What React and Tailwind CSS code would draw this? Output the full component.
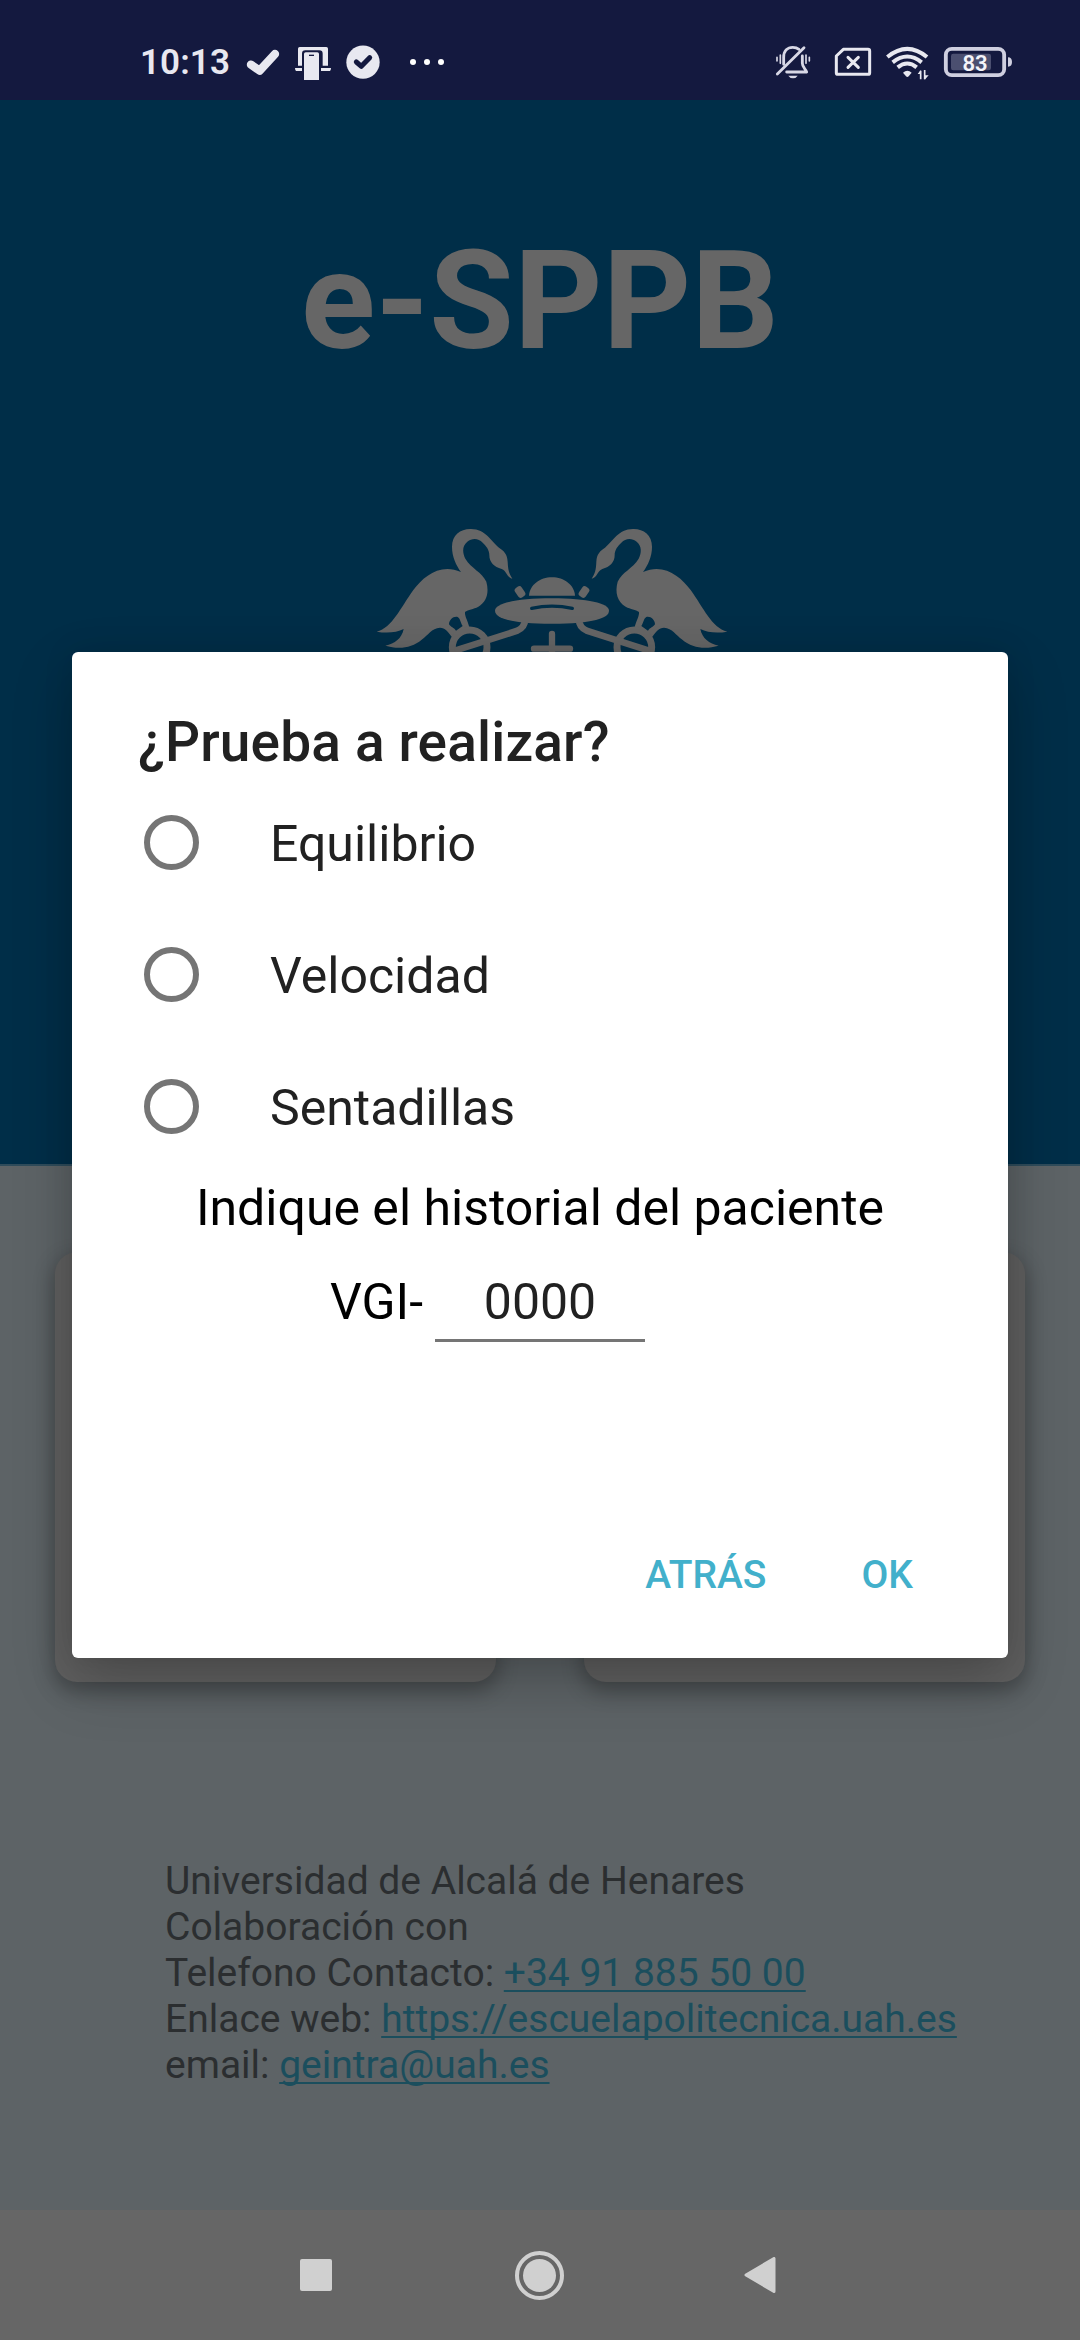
function CheckIcon() {
  return (
    <svg className="block h-9 w-9" viewBox="375 75 108 108" fill="none" stroke="#e8e8f0" strokeWidth="25" strokeLinecap="round" strokeLinejoin="round">
      <path d="M393 134L419 152L465 102" />
    </svg>
  );
}

function PhoneDesktopIcon() {
  return (
    <svg className="block h-9 w-9" viewBox="525 75 108 108" fill="#e8e8f0">
      <path d="M534 137V86Q534 81 539 81H619Q624 81 624 86V137H608V101Q608 91 598 91H556Q546 91 546 101V137Z" />
      <path d="M525 144H546V153H528Q525 150 525 144ZM603 144H633Q633 150 630 153H603Z" />
      <path d="M552 180V102Q552 97 557 97H592Q597 97 597 102V180Z" />
      <path d="M567 104H582V108H567Z" fill="#14193f" />
    </svg>
  );
}

function CheckCircleIcon() {
  return (
    <svg className="block h-9 w-9" viewBox="675 75 108 108" fill="none">
      <circle cx="729" cy="126.500" r="50" fill="#e8e8f0" />
      <path d="M709 126L724 139L749 113" stroke="#14193f" strokeWidth="15" strokeLinecap="round" strokeLinejoin="round" />
    </svg>
  );
}

function BellOffIcon() {
  return (
    <svg className="block h-9 w-[39px]" viewBox="102 75 117 108" fill="none" stroke="#d8d8e6" strokeWidth="8.500" strokeLinecap="round">
      <path d="M131 133V112C131 92 143 82 158 82C166 82 172 84 177 88" />
      <path d="M187 108V130C187 143 198 147 200 156H140" strokeLinejoin="round" />
      <path d="M112 162L192 83" />
      <path d="M111 112V123M121 105V130M198 105V130M208 112V123" strokeWidth="5" />
      <path d="M145 167H173Q168 175 159 175Q150 175 145 167Z" fill="#d8d8e6" stroke="none" />
    </svg>
  );
}

function SimOffIcon() {
  return (
    <svg className="block h-9 w-[39px]" viewBox="282 75 117 108" fill="none" stroke="#e8e8f0" strokeWidth="9" strokeLinejoin="round" strokeLinecap="round">
      <path d="M310 88H384Q389 88 389 93V158Q389 163 384 163H294Q289 163 289 158V108Z" />
      <path d="M324 112L355 142M355 112L324 142" />
    </svg>
  );
}

function WifiIcon() {
  return (
    <svg className="block h-9 w-[45px]" viewBox="435 75 135 108" fill="none" stroke="#e8e8f0" strokeWidth="12">
      <path d="M442 111Q502 62 561 111M458 127Q502 92 545 127M473 142Q502 119 530 142" />
      <path d="M489 158Q502 147 515 158L506 169Q502 173 498 169Z" fill="#e8e8f0" stroke="none" />
      <path d="M542 178V152M554 150V178" strokeWidth="5" />
      <path d="M533 162L542 150V162ZM566 166L554 179V166Z" fill="#e8e8f0" stroke="none" />
    </svg>
  );
}

function BatteryIcon() {
  return (
    <svg className="block h-9 w-[70px]" viewBox="609 75 210 108">
      <rect x="617.500" y="86.500" width="175" height="79" rx="18" fill="none" stroke="#cfcfe0" strokeWidth="11.500" />
      <rect x="633" y="101" width="120" height="50" rx="7" fill="#4b4f70" />
      <path d="M804 112Q816 112 816 126Q816 140 804 140Z" fill="#cfcfe0" />
      <text x="705" y="152" textAnchor="middle" fontFamily="Roboto, sans-serif" fontWeight="600" fontSize="66" fill="#f4f4fa">83</text>
    </svg>
  );
}

function Swan() {
  return (
    <g>
      <path d="M50 365C98 352 120 295 160 240C190 200 240 158 303 186C288 165 276 140 276 110C276 75 302 56 333 57C378 58 391 92 417 113C432 123 442 132 443 155C444 180 447 190 457 206C440 202 441 184 425 177C402 171 388 157 388 136C388 118 378 108 368 98C355 84 336 84 322 95C306 108 307 128 316 146C334 176 366 186 379 215C388 248 380 275 355 290C340 298 325 298 315 306C314 320 323 330 328 352L275 380C262 362 256 355 240 353C215 354 204 376 185 389C155 415 115 418 76 407C105 400 125 386 131 357C110 368 80 370 50 365Z" />
      <path d="M267 343C267 330 280 318 293 321C301 325 301 338 308 348L288 362C281 352 273 352 267 343Z" fill="#002e48" />
      <circle cx="329" cy="412" r="52" fill="none" stroke="#666" strokeWidth="21" />
      <path d="M285 422L470 363Q495 352 495 330" fill="none" stroke="#666" strokeWidth="20" />
      <rect x="468" y="229" width="24" height="34" rx="9" transform="rotate(-35 480 246)" />
    </g>
  );
}

function Crest() {
  return (
    <svg className="block h-[160px] w-[380px]" viewBox="0 0 1140 480" fill="#666">
      <Swan />
      <g transform="translate(1152 0) scale(-1 1)">
        <Swan />
      </g>
      <path d="M507 257C509 225 540 202 576 202C612 202 643 225 645 257Z" />
      <path d="M405 302C405 280 470 265 576 265C682 265 747 280 747 302C747 324 700 341 576 341C452 341 405 324 405 302Z" />
      <path d="M515 295Q576 282 637 295" fill="none" stroke="#002e48" strokeWidth="10" strokeLinecap="round" />
      <path d="M576 372V470" fill="none" stroke="#666" strokeWidth="19" strokeLinecap="round" />
      <path d="M522 416H630" fill="none" stroke="#666" strokeWidth="19" strokeLinecap="round" />
    </svg>
  );
}

function StatusBar() {
  return (
    <div className="flex h-[100px] items-start bg-[#14193f] pt-[45px] pr-[67px] pl-[140px]">
      <span className="w-[105px] text-[35px] leading-9 font-semibold tracking-[0.1px] whitespace-nowrap text-[#e8e8f0]">10:13</span>
      <CheckIcon />
      <div className="ml-3.5"><PhoneDesktopIcon /></div>
      <div className="ml-3.5"><CheckCircleIcon /></div>
      <div className="mt-3.5 ml-[29px] flex gap-2">
        <span className="size-1.5 rounded-full bg-white" />
        <span className="size-1.5 rounded-full bg-white" />
        <span className="size-1.5 rounded-full bg-white" />
      </div>
      <div className="ml-auto flex">
        <BellOffIcon />
        <div className="ml-[21px]"><SimOffIcon /></div>
        <div className="ml-3"><WifiIcon /></div>
        <div className="ml-[13px]"><BatteryIcon /></div>
      </div>
    </div>
  );
}

function NavBar() {
  return (
    <div className="flex h-[130px] items-center bg-[#666] pl-[300px]">
      <span className="size-8 rounded-[2px] bg-[#d0d0d0]" />
      <span className="ml-[183px] flex size-[49px] items-center justify-center rounded-full border-4 border-[#d0d0d0]">
        <span className="size-[33px] rounded-full bg-[#d0d0d0]" />
      </span>
      <svg className="ml-[180px] block h-9 w-8" viewBox="0 0 32 36" fill="#d0d0d0" stroke="#d0d0d0" strokeWidth="3" strokeLinejoin="round">
        <path d="M2 18L30 1.500V34.500Z" />
      </svg>
    </div>
  );
}

const links = "text-[#1b4e5d] underline decoration-2 underline-offset-[4px] [text-decoration-skip-ink:none]";
const tests = ["Equilibrio", "Velocidad", "Sentadillas"];

function Dialog() {
  return (
    <div className="absolute top-[652px] left-[72px] flex h-[1006px] w-[936px] flex-col rounded-[6px] bg-white shadow-[0_24px_60px_0px_rgba(0,0,0,0.22),0_0_30px_0_rgba(0,0,0,0.1)]">
      <h2 className="mt-[57px] ml-[66px] text-[55px] leading-[66px] font-medium tracking-[0.16px] whitespace-nowrap text-[#212121]">¿Prueba a realizar?</h2>
      <div className="mt-px flex flex-col">
        {tests.map((name) => (
          <label key={name} className="flex h-[132px] items-center pl-[71.500px]">
            <span className="size-[55px] rounded-full border-[6px] border-[#757575]" />
            <span className="mt-[3px] ml-[71.500px] text-[50px] leading-[58px] text-[#212121]">{name}</span>
          </label>
        ))}
      </div>
      <p className="mt-[7px] text-center text-[50px] leading-[58px] whitespace-nowrap text-black">Indique el historial del paciente</p>
      <div className="mt-9 flex items-start pl-[258px] text-[50px] leading-[58px]">
        <span className="w-[105px] text-black">VGI-</span>
        <span className="h-[69px] w-[210px] border-b-[3px] border-[#757575] text-center text-[#212121]">0000</span>
      </div>
      <div className="mt-auto mb-[60px] flex justify-end gap-[95px] pr-[95px] text-[39px] leading-[46px] font-medium text-[#42b0cb]">
        <span>ATRÁS</span>
        <span>OK</span>
      </div>
    </div>
  );
}

export default function App() {
  return (
    <div className="relative flex h-[2340px] w-[1080px] flex-col overflow-hidden font-[Roboto,sans-serif]">
      <StatusBar />
      <div className="flex h-[1066px] flex-col items-center border-b-2 border-[#2f4c5b] bg-[#002e48]">
        <h1 className="mt-[121px] text-[137.500px] leading-[161px] font-bold text-[#666]">e-SPPB</h1>
        <div className="mt-[128px] ml-5"><Crest /></div>
      </div>
      <div className="flex h-[1044px] flex-col bg-[#5d6366]">
        <div className="mt-[86px] flex justify-between px-[55px]">
          <div className="h-[430px] w-[441px] rounded-[22px] bg-[#606060] shadow-[0_8px_20px_2px_rgba(0,0,0,0.28)]" />
          <div className="h-[430px] w-[441px] rounded-[22px] bg-[#606060] shadow-[0_8px_20px_2px_rgba(0,0,0,0.28)]" />
        </div>
        <div className="mt-[176px] ml-[165px] text-[39px] leading-[46px] whitespace-nowrap text-[#2b2e30]">
          <p>Universidad de Alcalá de Henares</p>
          <p>Colaboración con</p>
          <p>Telefono Contacto: <a className={links}>+34 91 885 50 00</a></p>
          <p>Enlace web: <a className={links}>https://escuelapolitecnica.uah.es</a></p>
          <p>email: <a className={links}>geintra@uah.es</a></p>
        </div>
      </div>
      <NavBar />
      <Dialog />
    </div>
  );
}
